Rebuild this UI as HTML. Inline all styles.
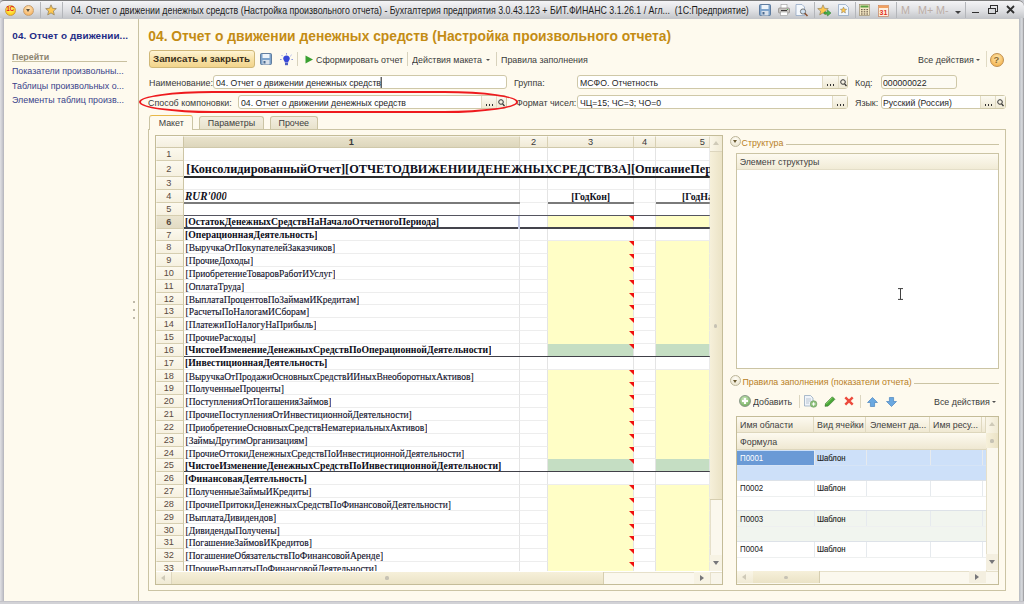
<!DOCTYPE html><html><head><meta charset="utf-8"><style>
*{margin:0;padding:0;box-sizing:border-box}
html,body{width:1024px;height:604px;overflow:hidden;background:#c8cacf;font-family:"Liberation Sans",sans-serif;font-size:8.8px;color:#333}
.a{position:absolute;white-space:nowrap}
#tb{position:absolute;left:0;top:0;width:1024px;height:20px;border-top:1px solid #7a7a7a;border-radius:4px 6px 0 0;background:linear-gradient(#f4f4f6,#dfe0e3 50%,#bfc1c5)}
#content{position:absolute;left:3.8px;top:19.4px;width:1015.3px;height:581.5px;background:#fefaee;overflow:hidden}
.vsep{position:absolute;width:1px;background:#bdb9a6}
.inp{position:absolute;background:#fff;border:1px solid #cfc8a8;border-radius:3px}
.inp .t{position:absolute;left:1.8px;top:1px;color:#1e1e1e;font-size:9.5px;transform:scaleX(0.915);transform-origin:0 0}
.lbl{position:absolute;color:#3a3a3a;white-space:nowrap;font-size:9.6px;transform:scaleX(0.925);transform-origin:0 0;margin-top:-0.6px}
.eb{position:absolute;top:0;bottom:0;border-left:1px solid #e2dcc4;background:linear-gradient(#fcfaf2,#efe9d4)}
.grid{position:absolute;overflow:hidden}
.cell{position:absolute;overflow:hidden;white-space:nowrap}
.ts{font-family:"Liberation Serif",serif;color:#1c1c30}
</style></head><body>
<div id="tb"></div>
<div class="a" style="left:4.9px;top:4.7px;width:11px;height:11px;border-radius:50%;background:radial-gradient(circle at 50% 35%,#fff58a,#ffd21a 70%,#e8a020);border:0.8px solid #d09a40"></div>
<div class="a" style="left:6.3px;top:5.4px;font:bold 6.4px 'Liberation Sans';color:#e0201a;letter-spacing:-0.4px">1С</div>
<div class="a" style="left:22.9px;top:4.7px;width:11.6px;height:11.6px;border-radius:50%;background:radial-gradient(circle at 50% 30%,#ffe6c0,#f8b868 75%,#e49a48);border:0.8px solid #c8a070"></div>
<div class="a" style="left:26px;top:9.2px;width:0;height:0;border-left:2.9px solid transparent;border-right:2.9px solid transparent;border-top:3.2px solid #585040"></div>
<div class="vsep" style="left:40.3px;top:2px;height:16px;background:#b4b6ba"></div>
<svg class="a" style="left:45px;top:4px" width="12" height="12" viewBox="0 0 12 12"><path d="M6 0.8 L7.5 4.3 L11.3 4.6 L8.4 7.1 L9.3 10.9 L6 8.9 L2.7 10.9 L3.6 7.1 L0.7 4.6 L4.5 4.3 Z" fill="#ffc850" stroke="#8a7a5a" stroke-width="0.7"/></svg>
<div class="vsep" style="left:62px;top:2px;height:16px;background:#b4b6ba"></div>
<div class="a" style="left:71.3px;top:3.6px;font-size:10.6px;color:#1c1c1c;transform:scaleX(0.832);transform-origin:left">04. Отчет о движении денежных средств (Настройка произвольного отчета) - Бухгалтерия предприятия 3.0.43.123 + БИТ.ФИНАНС 3.1.26.1 / Агл...&nbsp; (1С:Предприятие)</div>
<svg class="a" style="left:759px;top:4.2px" width="12" height="12" viewBox="0 0 12 12"><rect x="0.5" y="0.5" width="11" height="11" rx="1" fill="#7ea4cc" stroke="#4a6a90" stroke-width="0.8"/><rect x="2.5" y="1" width="7" height="4" fill="#eef4fa"/><rect x="2.5" y="7" width="7" height="4.5" fill="#d8e0ea"/><rect x="3.5" y="8" width="2" height="2.5" fill="#4a6a90"/></svg>
<svg class="a" style="left:778px;top:4px" width="12" height="12" viewBox="0 0 12 12"><rect x="3" y="0.5" width="6" height="4" fill="#fff" stroke="#999" stroke-width="0.6"/><rect x="0.5" y="4" width="11" height="5" rx="1" fill="#c8c4c0" stroke="#807a76" stroke-width="0.6"/><rect x="2.5" y="8" width="7" height="3.5" fill="#fff" stroke="#999" stroke-width="0.6"/><rect x="3" y="6" width="6" height="1" fill="#403c3c"/><circle cx="9.5" cy="5.5" r="0.6" fill="#3a3"/></svg>
<svg class="a" style="left:795px;top:3.5px" width="14" height="13" viewBox="0 0 14 13"><path d="M1 0.5 H7 L9.5 3 V11.5 H1 Z" fill="#f4f8fc" stroke="#8aa0c0" stroke-width="0.7"/><circle cx="8" cy="7.5" r="2.6" fill="#cfe0f0" stroke="#6a6a6a" stroke-width="0.9"/><path d="M9.8 9.3 L12.5 12" stroke="#8a5030" stroke-width="1.6"/></svg>
<div class="vsep" style="left:813.8px;top:2px;height:16px;background:#b4b6ba"></div>
<svg class="a" style="left:817px;top:3.5px" width="15" height="13" viewBox="0 0 15 13"><path d="M6 0.8 L7.5 4.3 L11.3 4.6 L8.4 7.1 L9.3 10.9 L6 8.9 L2.7 10.9 L3.6 7.1 L0.7 4.6 L4.5 4.3 Z" fill="#ffc850" stroke="#8a7a5a" stroke-width="0.6"/><path d="M7 8 H10.5 V6 L14 9 L10.5 12 V10 H7 Z" fill="#4ab04a" stroke="#2a7a2a" stroke-width="0.5"/></svg>
<svg class="a" style="left:837.5px;top:4px" width="11" height="12" viewBox="0 0 11 12"><path d="M0.5 0.5 H7.5 L10.5 3.5 V11.5 H0.5 Z" fill="#f0f6fc" stroke="#8aa0c0" stroke-width="0.7"/><path d="M5.5 3 L6.4 5.1 L8.6 5.3 L6.9 6.7 L7.5 9 L5.5 7.8 L3.5 9 L4.1 6.7 L2.4 5.3 L4.6 5.1 Z" fill="#ffc850" stroke="#8a7a5a" stroke-width="0.5"/></svg>
<div class="vsep" style="left:854.5px;top:2px;height:16px;background:#b4b6ba"></div>
<svg class="a" style="left:859px;top:4px" width="11" height="12" viewBox="0 0 11 12"><rect x="0.5" y="0.5" width="10" height="11" fill="#f4e8c4" stroke="#a09070" stroke-width="0.7"/><rect x="1.5" y="1.5" width="8" height="2" fill="#5aa040"/><g fill="#706050"><rect x="2" y="5" width="1.6" height="1.2"/><rect x="4.7" y="5" width="1.6" height="1.2"/><rect x="7.4" y="5" width="1.6" height="1.2"/><rect x="2" y="7.2" width="1.6" height="1.2"/><rect x="4.7" y="7.2" width="1.6" height="1.2"/><rect x="7.4" y="7.2" width="1.6" height="1.2"/><rect x="2" y="9.4" width="1.6" height="1.2"/><rect x="4.7" y="9.4" width="1.6" height="1.2"/><rect x="7.4" y="9.4" width="1.6" height="1.2"/></g></svg>
<svg class="a" style="left:877.5px;top:3.5px" width="11" height="13" viewBox="0 0 11 13"><rect x="0.5" y="1.5" width="10" height="11" fill="#fff0e0" stroke="#c08060" stroke-width="0.7"/><rect x="0.5" y="1.5" width="10" height="2.5" fill="#f0a060"/><text x="5.5" y="11" font-family="Liberation Sans" font-size="7" font-weight="bold" fill="#e03020" text-anchor="middle">31</text></svg>
<div class="vsep" style="left:895.7px;top:2px;height:16px;background:#b4b6ba"></div>
<div class="a" style="left:901px;top:3.6px;font:10.8px 'Liberation Sans';color:#bcaea6">M</div>
<div class="a" style="left:918px;top:3.6px;font:10.8px 'Liberation Sans';color:#bcaea6">M+</div>
<div class="a" style="left:936px;top:3.6px;font:10.8px 'Liberation Sans';color:#bcaea6">M-</div>
<div class="a" style="left:955px;top:11px;width:0;height:0;border-left:3px solid transparent;border-right:3px solid transparent;border-top:3px solid #404040"></div>
<div class="vsep" style="left:964.5px;top:2px;height:16px;background:#b4b6ba"></div>
<div class="a" style="left:972px;top:11.5px;width:6.5px;height:1.6px;background:#303030"></div>
<div class="a" style="left:990px;top:5px;width:8px;height:6.5px;border:1px solid #303030;border-top-width:1.6px"></div>
<div class="a" style="left:988px;top:7.5px;width:8px;height:6.5px;border:1px solid #303030;border-top-width:1.6px;background:#d8d9dc"></div>
<svg class="a" style="left:1006px;top:5px" width="9" height="9" viewBox="0 0 9 9"><path d="M1 1 L8 8 M8 1 L1 8" stroke="#303030" stroke-width="1.8"/></svg>
<div class="a" style="left:0;top:18px;width:3.9px;height:586px;background:linear-gradient(90deg,#e0e0e4,#cacad0 55%,#b2b2ba)"></div>
<div class="a" style="left:1019px;top:18px;width:5px;height:586px;background:linear-gradient(90deg,#b6bac0,#d6d8dc 55%,#c8c9cc 75%,#8a8a8e)"></div>
<div class="a" style="left:0;top:600.8px;width:1024px;height:3.2px;background:linear-gradient(#bcbbc2,#d2d2d6 50%)"></div>
<div id="content"></div>
<div class="a" style="left:12.3px;top:30.4px;font:bold 9.9px 'Liberation Sans';color:#1e2c86;letter-spacing:0.1px">04. Отчет о движении...</div>
<div class="a" style="left:12px;top:50.6px;font:bold 9.6px 'Liberation Sans';color:#8c8470;transform:scaleX(0.93);transform-origin:0 0">Перейти</div>
<div class="a" style="left:11.5px;top:61.3px;width:115px;height:1px;background:#c8c0a0"></div>
<div class="a" style="left:12px;top:65.1px;font-size:9.7px;color:#38428a;transform:scaleX(0.915);transform-origin:0 0">Показатели произвольны...</div>
<div class="a" style="left:12px;top:79.5px;font-size:9.7px;color:#38428a;transform:scaleX(0.915);transform-origin:0 0">Таблицы произвольных о...</div>
<div class="a" style="left:12px;top:93.89999999999999px;font-size:9.7px;color:#38428a;transform:scaleX(0.915);transform-origin:0 0">Элементы таблиц произв...</div>
<div class="a" style="left:138px;top:19.4px;width:1px;height:581.5px;background:#c9c2a2"></div>
<div class="a" style="left:133px;top:301.1px;width:2.4px;height:2.4px;border-radius:50%;background:#a8a290"></div>
<div class="a" style="left:133px;top:309.1px;width:2.4px;height:2.4px;border-radius:50%;background:#a8a290"></div>
<div class="a" style="left:133px;top:317.1px;width:2.4px;height:2.4px;border-radius:50%;background:#a8a290"></div>
<div class="a" style="left:148.3px;top:27.5px;font:bold 13.82px 'Liberation Sans';color:#c48c14">04. Отчет о движении денежных средств (Настройка произвольного отчета)</div>
<div class="a" style="left:148.5px;top:50.2px;width:106px;height:17.6px;border:1px solid #d0b878;border-radius:3px;background:linear-gradient(#fff4d4,#f8e2a8 50%,#f2d48c)"></div>
<div class="a" style="left:153px;top:53.2px;font:bold 9.8px 'Liberation Sans';color:#3a3020">Записать и закрыть</div>
<svg class="a" style="left:260px;top:53.2px" width="12" height="12" viewBox="0 0 12 12"><rect x="0.5" y="0.5" width="11" height="11" rx="1" fill="#7ea4cc" stroke="#4a6a90" stroke-width="0.8"/><rect x="2.5" y="1" width="7" height="4" fill="#eef4fa"/><rect x="2.5" y="7" width="7" height="4.5" fill="#d8e0ea"/><rect x="3.5" y="8" width="2" height="2.5" fill="#4a6a90"/></svg>
<svg class="a" style="left:280px;top:52.5px" width="13" height="13" viewBox="0 0 13 13"><g stroke="#7080e0" stroke-width="0.8"><path d="M6.5 0 V1.6 M1.5 2 L2.6 3.1 M11.5 2 L10.4 3.1 M0 6.5 H1.6 M13 6.5 H11.4"/></g><path d="M6.5 2.4 C4.3 2.4 3.2 4 3.2 5.6 C3.2 7.2 4.6 8 4.8 9.4 H8.2 C8.4 8 9.8 7.2 9.8 5.6 C9.8 4 8.7 2.4 6.5 2.4 Z" fill="#3848d8"/><rect x="5" y="9.8" width="3" height="2.4" fill="#5060c0"/></svg>
<div class="vsep" style="left:297.3px;top:52px;height:14px;background:#d8d2bc"></div>
<svg class="a" style="left:305px;top:54.5px" width="9" height="9" viewBox="0 0 9 9"><path d="M0.5 0.5 L8 4.5 L0.5 8.5 Z" fill="#3aa030"/></svg>
<div class="lbl" style="left:316.3px;top:54.2px">Сформировать отчет</div>
<div class="vsep" style="left:406.8px;top:52px;height:14px;background:#d8d2bc"></div>
<div class="lbl" style="left:412px;top:54.2px">Действия макета</div>
<div class="a" style="left:486px;top:59px;width:0;height:0;border-left:2.5px solid transparent;border-right:2.5px solid transparent;border-top:2.8px solid #505050"></div>
<div class="vsep" style="left:495.7px;top:52px;height:14px;background:#d8d2bc"></div>
<div class="lbl" style="left:501px;top:54.2px">Правила заполнения</div>
<div class="lbl" style="left:918px;top:54.2px">Все действия</div>
<div class="a" style="left:976px;top:59px;width:0;height:0;border-left:2.5px solid transparent;border-right:2.5px solid transparent;border-top:2.8px solid #505050"></div>
<div class="vsep" style="left:985.5px;top:51px;height:16px;background:#e0dac4"></div>
<div class="a" style="left:989.5px;top:52.7px;width:14px;height:14px;border-radius:50%;background:radial-gradient(circle at 50% 35%,#ffe8b0,#f4b450 80%);border:0.8px solid #c09050"></div>
<div class="a" style="left:993.6px;top:54.3px;font:bold 9.5px 'Liberation Sans';color:#8a6a30">?</div>
<div class="lbl" style="left:148.5px;top:77.2px">Наименование:</div>
<div class="inp" style="left:213px;top:74.6px;width:293.6px;height:14.8px;background:#fff"><div class="t">04. Отчет о движении денежных средств<span style="display:inline-block;width:1px;height:11px;background:#000;vertical-align:-2px"></span></div></div>
<div class="lbl" style="left:148.2px;top:97.4px">Способ компоновки:</div>
<div class="inp" style="left:238.4px;top:94.5px;width:268.2px;height:14.8px;background:#fff"><div class="t">04. Отчет о движении денежных средств</div><div class="eb" style="right:0;width:9.5px"><svg style="position:absolute;left:1.2px;top:3px" width="7" height="8" viewBox="0 0 7 8"><circle cx="3" cy="3" r="2.3" fill="none" stroke="#333" stroke-width="1"/><path d="M4.6 4.8 L6.5 7" stroke="#333" stroke-width="1.3"/></svg></div><div class="eb" style="right:9.5px;width:15.5px"><div style="position:absolute;left:3px;bottom:2.5px;width:9px;height:2px;background:radial-gradient(circle,#333 0.9px,transparent 1px) 0 0/3px 2px repeat-x"></div></div></div>
<div class="lbl" style="left:513.8px;top:77.2px">Группа:</div>
<div class="inp" style="left:577.4px;top:74.5px;width:270.7px;height:14.8px;background:#fff"><div class="t">МСФО. Отчетность</div><div class="eb" style="right:0;width:9.5px"><svg style="position:absolute;left:1.2px;top:3px" width="7" height="8" viewBox="0 0 7 8"><circle cx="3" cy="3" r="2.3" fill="none" stroke="#333" stroke-width="1"/><path d="M4.6 4.8 L6.5 7" stroke="#333" stroke-width="1.3"/></svg></div><div class="eb" style="right:9.5px;width:15.5px"><div style="position:absolute;left:3px;bottom:2.5px;width:9px;height:2px;background:radial-gradient(circle,#333 0.9px,transparent 1px) 0 0/3px 2px repeat-x"></div></div></div>
<div class="lbl" style="left:516px;top:97.4px">Формат чисел:</div>
<div class="inp" style="left:577.4px;top:94.5px;width:270.7px;height:14.8px;background:#fff"><div class="t">ЧЦ=15; ЧС=3; ЧО=0</div><div class="eb" style="right:0px;width:15.5px"><div style="position:absolute;left:3px;bottom:2.5px;width:9px;height:2px;background:radial-gradient(circle,#333 0.9px,transparent 1px) 0 0/3px 2px repeat-x"></div></div></div>
<div class="lbl" style="left:854.7px;top:77.2px">Код:</div>
<div class="inp" style="left:880.5px;top:74.6px;width:76.6px;height:14.6px;background:#fdfbf3"><div class="t">000000022</div></div>
<div class="lbl" style="left:854.7px;top:97.4px">Язык:</div>
<div class="inp" style="left:880.5px;top:94.6px;width:125.2px;height:14.8px;background:#fff"><div class="t">Русский (Россия)</div><div class="eb" style="right:0;width:9.5px"><svg style="position:absolute;left:1.2px;top:3px" width="7" height="8" viewBox="0 0 7 8"><circle cx="3" cy="3" r="2.3" fill="none" stroke="#333" stroke-width="1"/><path d="M4.6 4.8 L6.5 7" stroke="#333" stroke-width="1.3"/></svg></div><div class="eb" style="right:9.5px;width:15.5px"><div style="position:absolute;left:3px;bottom:2.5px;width:9px;height:2px;background:radial-gradient(circle,#333 0.9px,transparent 1px) 0 0/3px 2px repeat-x"></div></div></div>
<div class="a" style="left:139.4px;top:90.8px;width:378.4px;height:22.4px;border:2.1px solid #ee1a1e;border-radius:75px/11.2px"></div>
<div class="a" style="left:148px;top:129px;width:857.5px;height:461.5px;border:1px solid #cbc4a4;background:#fefaee"></div>
<div class="a" style="left:149.4px;top:114.8px;width:43.7px;height:15.2px;border:1px solid #cbc4a4;border-bottom:none;border-radius:3px 3px 0 0;background:#fefaee;border-top:1.4px solid #e8b848"></div>
<div class="a" style="left:149.4px;width:43.7px;top:117.6px;text-align:center;font-size:8.9px;color:#404040">Макет</div>
<div class="a" style="left:198.6px;top:115.5px;width:65.8px;height:13.5px;border:1px solid #cbc4a4;border-bottom:none;border-radius:3px 3px 0 0;background:linear-gradient(#f2eee0,#e8e2cc)"></div>
<div class="a" style="left:198.6px;width:65.8px;top:117.6px;text-align:center;font-size:8.9px;color:#404040">Параметры</div>
<div class="a" style="left:269.9px;top:115.5px;width:47.8px;height:13.5px;border:1px solid #cbc4a4;border-bottom:none;border-radius:3px 3px 0 0;background:linear-gradient(#f2eee0,#e8e2cc)"></div>
<div class="a" style="left:269.9px;width:47.8px;top:117.6px;text-align:center;font-size:8.9px;color:#404040">Прочее</div>
<div class="a" style="left:154.9px;top:135.2px;width:568.0px;height:449.40000000000003px;border:1.4px solid #c4bc98;background:#fff"></div>
<div class="grid" style="left:154.9px;top:135.2px;width:554.9px;height:436.3px;clip-path:inset(1.4px 0 0 1.4px)"><div class="cell" style="left:0;top:0;width:28.799999999999983px;height:12.700000000000017px;background:linear-gradient(#fcf9f0,#f4efdf);border-right:1px solid #cdc5a5;border-bottom:1px solid #d0c8aa"></div><div class="cell" style="left:28.799999999999983px;top:0;width:336.2px;height:12.700000000000017px;background:linear-gradient(#ece6d0,#ddd6bc);border-right:1px solid #d8d0b4;border-bottom:1px solid #cfc8aa;text-align:center;font-size:9.2px;font-weight:bold;color:#3a3a3a;line-height:14.900000000000016px">1</div><div class="cell" style="left:365.0px;top:0;width:28.100000000000023px;height:12.700000000000017px;background:linear-gradient(#fbf8ee,#f0ead6);border-right:1px solid #d8d0b4;border-bottom:1px solid #cfc8aa;text-align:center;font-size:9.2px;font-weight:normal;color:#3a3a3a;line-height:14.900000000000016px">2</div><div class="cell" style="left:393.1px;top:0;width:86.29999999999995px;height:12.700000000000017px;background:linear-gradient(#fbf8ee,#f0ead6);border-right:1px solid #d8d0b4;border-bottom:1px solid #cfc8aa;text-align:center;font-size:9.2px;font-weight:normal;color:#3a3a3a;line-height:14.900000000000016px">3</div><div class="cell" style="left:479.4px;top:0;width:21.5px;height:12.700000000000017px;background:linear-gradient(#fbf8ee,#f0ead6);border-right:1px solid #d8d0b4;border-bottom:1px solid #cfc8aa;text-align:center;font-size:9.2px;font-weight:normal;color:#3a3a3a;line-height:14.900000000000016px">4</div><div class="cell" style="left:500.9px;top:0;width:54.0px;height:12.700000000000017px;background:linear-gradient(#fbf8ee,#f0ead6);border-right:1px solid #d8d0b4;border-bottom:1px solid #cfc8aa;text-align:center;font-size:9.2px;font-weight:normal;color:#3a3a3a;line-height:14.900000000000016px"></div><div class="cell" style="left:500.9px;top:0;width:49.0px;height:12.700000000000017px;text-align:right;font-size:9.2px;color:#3a3a3a;line-height:14.900000000000016px">5</div><div class="cell" style="left:0;top:12.700000000000017px;width:28.799999999999983px;height:13.0px;background:linear-gradient(#fcf9ee,#f6f1e0);border-right:1px solid #cdc5a5;border-bottom:1px solid #d6ceb0;text-align:center;font-size:9.2px;font-weight:normal;color:#5a4a40;line-height:13.6px">1</div><div class="cell" style="left:28.799999999999983px;top:12.700000000000017px;width:336.2px;height:13.0px;background:#fff;border-right:1px solid #e4e4e4;border-bottom:1px solid #ededed"></div><div class="cell" style="left:365.0px;top:12.700000000000017px;width:28.100000000000023px;height:13.0px;background:#fff;border-right:1px solid #e4e4e4;border-bottom:1px solid #ededed"></div><div class="cell" style="left:393.1px;top:12.700000000000017px;width:86.29999999999995px;height:13.0px;background:#fff;border-right:1px solid #e4e4e4;border-bottom:1px solid #ededed"></div><div class="cell" style="left:479.4px;top:12.700000000000017px;width:21.5px;height:13.0px;background:#fff;border-right:1px solid #e4e4e4;border-bottom:1px solid #ededed"></div><div class="cell" style="left:500.9px;top:12.700000000000017px;width:54.0px;height:13.0px;background:#fff;border-right:1px solid #e4e4e4;border-bottom:1px solid #ededed"></div><div class="cell" style="left:0;top:25.700000000000017px;width:28.799999999999983px;height:16.299999999999983px;background:linear-gradient(#fcf9ee,#f6f1e0);border-right:1px solid #cdc5a5;border-bottom:1px solid #d6ceb0;text-align:center;font-size:9.2px;font-weight:normal;color:#5a4a40;line-height:16.899999999999984px">2</div><div class="cell" style="left:28.799999999999983px;top:25.700000000000017px;width:336.2px;height:16.299999999999983px;background:#fff;border-right:1px solid #e4e4e4;border-bottom:1px solid #ededed"></div><div class="cell" style="left:365.0px;top:25.700000000000017px;width:28.100000000000023px;height:16.299999999999983px;background:#fff;border-right:1px solid #e4e4e4;border-bottom:1px solid #ededed"></div><div class="cell" style="left:393.1px;top:25.700000000000017px;width:86.29999999999995px;height:16.299999999999983px;background:#fff;border-right:1px solid #e4e4e4;border-bottom:1px solid #ededed"></div><div class="cell" style="left:479.4px;top:25.700000000000017px;width:21.5px;height:16.299999999999983px;background:#fff;border-right:1px solid #e4e4e4;border-bottom:1px solid #ededed"></div><div class="cell" style="left:500.9px;top:25.700000000000017px;width:54.0px;height:16.299999999999983px;background:#fff;border-right:1px solid #e4e4e4;border-bottom:1px solid #ededed"></div><div class="cell" style="left:0;top:42.0px;width:28.799999999999983px;height:12.830000000000013px;background:linear-gradient(#fcf9ee,#f6f1e0);border-right:1px solid #cdc5a5;border-bottom:1px solid #d6ceb0;text-align:center;font-size:9.2px;font-weight:normal;color:#5a4a40;line-height:13.430000000000012px">3</div><div class="cell" style="left:28.799999999999983px;top:42.0px;width:336.2px;height:12.830000000000013px;background:#fff;border-right:1px solid #e4e4e4;border-bottom:1px solid #ededed"></div><div class="cell" style="left:365.0px;top:42.0px;width:28.100000000000023px;height:12.830000000000013px;background:#fff;border-right:1px solid #e4e4e4;border-bottom:1px solid #ededed"></div><div class="cell" style="left:393.1px;top:42.0px;width:86.29999999999995px;height:12.830000000000013px;background:#fff;border-right:1px solid #e4e4e4;border-bottom:1px solid #ededed"></div><div class="cell" style="left:479.4px;top:42.0px;width:21.5px;height:12.830000000000013px;background:#fff;border-right:1px solid #e4e4e4;border-bottom:1px solid #ededed"></div><div class="cell" style="left:500.9px;top:42.0px;width:54.0px;height:12.830000000000013px;background:#fff;border-right:1px solid #e4e4e4;border-bottom:1px solid #ededed"></div><div class="cell" style="left:0;top:54.83000000000001px;width:28.799999999999983px;height:12.829999999999984px;background:linear-gradient(#fcf9ee,#f6f1e0);border-right:1px solid #cdc5a5;border-bottom:1px solid #d6ceb0;text-align:center;font-size:9.2px;font-weight:normal;color:#5a4a40;line-height:13.429999999999984px">4</div><div class="cell" style="left:28.799999999999983px;top:54.83000000000001px;width:336.2px;height:12.829999999999984px;background:#fff;border-right:1px solid #e4e4e4;border-bottom:1px solid #ededed"></div><div class="cell" style="left:365.0px;top:54.83000000000001px;width:28.100000000000023px;height:12.829999999999984px;background:#fff;border-right:1px solid #e4e4e4;border-bottom:1px solid #ededed"></div><div class="cell" style="left:393.1px;top:54.83000000000001px;width:86.29999999999995px;height:12.829999999999984px;background:#fff;border-right:1px solid #e4e4e4;border-bottom:1px solid #ededed"></div><div class="cell" style="left:479.4px;top:54.83000000000001px;width:21.5px;height:12.829999999999984px;background:#fff;border-right:1px solid #e4e4e4;border-bottom:1px solid #ededed"></div><div class="cell" style="left:500.9px;top:54.83000000000001px;width:54.0px;height:12.829999999999984px;background:#fff;border-right:1px solid #e4e4e4;border-bottom:1px solid #ededed"></div><div class="cell" style="left:0;top:67.66px;width:28.799999999999983px;height:12.830000000000013px;background:linear-gradient(#fcf9ee,#f6f1e0);border-right:1px solid #cdc5a5;border-bottom:1px solid #d6ceb0;text-align:center;font-size:9.2px;font-weight:normal;color:#5a4a40;line-height:13.430000000000012px">5</div><div class="cell" style="left:28.799999999999983px;top:67.66px;width:336.2px;height:12.830000000000013px;background:#fff;border-right:1px solid #e4e4e4;border-bottom:1px solid #ededed"></div><div class="cell" style="left:365.0px;top:67.66px;width:28.100000000000023px;height:12.830000000000013px;background:#fff;border-right:1px solid #e4e4e4;border-bottom:1px solid #ededed"></div><div class="cell" style="left:393.1px;top:67.66px;width:86.29999999999995px;height:12.830000000000013px;background:#fff;border-right:1px solid #e4e4e4;border-bottom:1px solid #ededed"></div><div class="cell" style="left:479.4px;top:67.66px;width:21.5px;height:12.830000000000013px;background:#fff;border-right:1px solid #e4e4e4;border-bottom:1px solid #ededed"></div><div class="cell" style="left:500.9px;top:67.66px;width:54.0px;height:12.830000000000013px;background:#fff;border-right:1px solid #e4e4e4;border-bottom:1px solid #ededed"></div><div class="cell" style="left:0;top:80.49000000000001px;width:28.799999999999983px;height:12.829999999999984px;background:linear-gradient(#ebe5d0,#e2dbc4);border-right:1px solid #cdc5a5;border-bottom:1px solid #d6ceb0;text-align:center;font-size:9.2px;font-weight:bold;color:#5a4a40;line-height:13.429999999999984px">6</div><div class="cell" style="left:28.799999999999983px;top:80.49000000000001px;width:336.2px;height:12.829999999999984px;background:#fff;border-right:1px solid #e4e4e4;border-bottom:1px solid #ededed"></div><div class="cell" style="left:365.0px;top:80.49000000000001px;width:28.100000000000023px;height:12.829999999999984px;background:#fff;border-right:1px solid #e4e4e4;border-bottom:1px solid #ededed"></div><div class="cell" style="left:393.1px;top:80.49000000000001px;width:86.29999999999995px;height:12.829999999999984px;background:#fffec6;border-right:1px solid #e4e4e4;border-bottom:1px solid #fffec6"></div><div class="cell" style="left:474.4px;top:80.49000000000001px;width:0;height:0;border-left:5px solid transparent;border-top:5px solid #f01010"></div><div class="cell" style="left:479.4px;top:80.49000000000001px;width:21.5px;height:12.829999999999984px;background:#fff;border-right:1px solid #e4e4e4;border-bottom:1px solid #ededed"></div><div class="cell" style="left:500.9px;top:80.49000000000001px;width:54.0px;height:12.829999999999984px;background:#fffec6;border-right:1px solid #e4e4e4;border-bottom:1px solid #fffec6"></div><div class="cell" style="left:0;top:93.32px;width:28.799999999999983px;height:12.830000000000013px;background:linear-gradient(#fcf9ee,#f6f1e0);border-right:1px solid #cdc5a5;border-bottom:1px solid #d6ceb0;text-align:center;font-size:9.2px;font-weight:normal;color:#5a4a40;line-height:13.430000000000012px">7</div><div class="cell" style="left:28.799999999999983px;top:93.32px;width:336.2px;height:12.830000000000013px;background:#fff;border-right:1px solid #e4e4e4;border-bottom:1px solid #ededed"></div><div class="cell" style="left:365.0px;top:93.32px;width:28.100000000000023px;height:12.830000000000013px;background:#fff;border-right:1px solid #e4e4e4;border-bottom:1px solid #ededed"></div><div class="cell" style="left:393.1px;top:93.32px;width:86.29999999999995px;height:12.830000000000013px;background:#fff;border-right:1px solid #e4e4e4;border-bottom:1px solid #ededed"></div><div class="cell" style="left:479.4px;top:93.32px;width:21.5px;height:12.830000000000013px;background:#fff;border-right:1px solid #e4e4e4;border-bottom:1px solid #ededed"></div><div class="cell" style="left:500.9px;top:93.32px;width:54.0px;height:12.830000000000013px;background:#fff;border-right:1px solid #e4e4e4;border-bottom:1px solid #ededed"></div><div class="cell" style="left:0;top:106.15px;width:28.799999999999983px;height:12.830000000000013px;background:linear-gradient(#fcf9ee,#f6f1e0);border-right:1px solid #cdc5a5;border-bottom:1px solid #d6ceb0;text-align:center;font-size:9.2px;font-weight:normal;color:#5a4a40;line-height:13.430000000000012px">8</div><div class="cell" style="left:28.799999999999983px;top:106.15px;width:336.2px;height:12.830000000000013px;background:#fff;border-right:1px solid #e4e4e4;border-bottom:1px solid #ededed"></div><div class="cell" style="left:365.0px;top:106.15px;width:28.100000000000023px;height:12.830000000000013px;background:#fff;border-right:1px solid #e4e4e4;border-bottom:1px solid #ededed"></div><div class="cell" style="left:393.1px;top:106.15px;width:86.29999999999995px;height:12.830000000000013px;background:#fffec6;border-right:1px solid #e4e4e4;border-bottom:1px solid #fffec6"></div><div class="cell" style="left:474.4px;top:106.15px;width:0;height:0;border-left:5px solid transparent;border-top:5px solid #f01010"></div><div class="cell" style="left:479.4px;top:106.15px;width:21.5px;height:12.830000000000013px;background:#fff;border-right:1px solid #e4e4e4;border-bottom:1px solid #ededed"></div><div class="cell" style="left:500.9px;top:106.15px;width:54.0px;height:12.830000000000013px;background:#fffec6;border-right:1px solid #e4e4e4;border-bottom:1px solid #fffec6"></div><div class="cell" style="left:0;top:118.98000000000002px;width:28.799999999999983px;height:12.829999999999984px;background:linear-gradient(#fcf9ee,#f6f1e0);border-right:1px solid #cdc5a5;border-bottom:1px solid #d6ceb0;text-align:center;font-size:9.2px;font-weight:normal;color:#5a4a40;line-height:13.429999999999984px">9</div><div class="cell" style="left:28.799999999999983px;top:118.98000000000002px;width:336.2px;height:12.829999999999984px;background:#fff;border-right:1px solid #e4e4e4;border-bottom:1px solid #ededed"></div><div class="cell" style="left:365.0px;top:118.98000000000002px;width:28.100000000000023px;height:12.829999999999984px;background:#fff;border-right:1px solid #e4e4e4;border-bottom:1px solid #ededed"></div><div class="cell" style="left:393.1px;top:118.98000000000002px;width:86.29999999999995px;height:12.829999999999984px;background:#fffec6;border-right:1px solid #e4e4e4;border-bottom:1px solid #fffec6"></div><div class="cell" style="left:474.4px;top:118.98000000000002px;width:0;height:0;border-left:5px solid transparent;border-top:5px solid #f01010"></div><div class="cell" style="left:479.4px;top:118.98000000000002px;width:21.5px;height:12.829999999999984px;background:#fff;border-right:1px solid #e4e4e4;border-bottom:1px solid #ededed"></div><div class="cell" style="left:500.9px;top:118.98000000000002px;width:54.0px;height:12.829999999999984px;background:#fffec6;border-right:1px solid #e4e4e4;border-bottom:1px solid #fffec6"></div><div class="cell" style="left:0;top:131.81px;width:28.799999999999983px;height:12.829999999999984px;background:linear-gradient(#fcf9ee,#f6f1e0);border-right:1px solid #cdc5a5;border-bottom:1px solid #d6ceb0;text-align:center;font-size:9.2px;font-weight:normal;color:#5a4a40;line-height:13.429999999999984px">10</div><div class="cell" style="left:28.799999999999983px;top:131.81px;width:336.2px;height:12.829999999999984px;background:#fff;border-right:1px solid #e4e4e4;border-bottom:1px solid #ededed"></div><div class="cell" style="left:365.0px;top:131.81px;width:28.100000000000023px;height:12.829999999999984px;background:#fff;border-right:1px solid #e4e4e4;border-bottom:1px solid #ededed"></div><div class="cell" style="left:393.1px;top:131.81px;width:86.29999999999995px;height:12.829999999999984px;background:#fffec6;border-right:1px solid #e4e4e4;border-bottom:1px solid #fffec6"></div><div class="cell" style="left:474.4px;top:131.81px;width:0;height:0;border-left:5px solid transparent;border-top:5px solid #f01010"></div><div class="cell" style="left:479.4px;top:131.81px;width:21.5px;height:12.829999999999984px;background:#fff;border-right:1px solid #e4e4e4;border-bottom:1px solid #ededed"></div><div class="cell" style="left:500.9px;top:131.81px;width:54.0px;height:12.829999999999984px;background:#fffec6;border-right:1px solid #e4e4e4;border-bottom:1px solid #fffec6"></div><div class="cell" style="left:0;top:144.64px;width:28.799999999999983px;height:12.829999999999984px;background:linear-gradient(#fcf9ee,#f6f1e0);border-right:1px solid #cdc5a5;border-bottom:1px solid #d6ceb0;text-align:center;font-size:9.2px;font-weight:normal;color:#5a4a40;line-height:13.429999999999984px">11</div><div class="cell" style="left:28.799999999999983px;top:144.64px;width:336.2px;height:12.829999999999984px;background:#fff;border-right:1px solid #e4e4e4;border-bottom:1px solid #ededed"></div><div class="cell" style="left:365.0px;top:144.64px;width:28.100000000000023px;height:12.829999999999984px;background:#fff;border-right:1px solid #e4e4e4;border-bottom:1px solid #ededed"></div><div class="cell" style="left:393.1px;top:144.64px;width:86.29999999999995px;height:12.829999999999984px;background:#fffec6;border-right:1px solid #e4e4e4;border-bottom:1px solid #fffec6"></div><div class="cell" style="left:474.4px;top:144.64px;width:0;height:0;border-left:5px solid transparent;border-top:5px solid #f01010"></div><div class="cell" style="left:479.4px;top:144.64px;width:21.5px;height:12.829999999999984px;background:#fff;border-right:1px solid #e4e4e4;border-bottom:1px solid #ededed"></div><div class="cell" style="left:500.9px;top:144.64px;width:54.0px;height:12.829999999999984px;background:#fffec6;border-right:1px solid #e4e4e4;border-bottom:1px solid #fffec6"></div><div class="cell" style="left:0;top:157.46999999999997px;width:28.799999999999983px;height:12.830000000000041px;background:linear-gradient(#fcf9ee,#f6f1e0);border-right:1px solid #cdc5a5;border-bottom:1px solid #d6ceb0;text-align:center;font-size:9.2px;font-weight:normal;color:#5a4a40;line-height:13.43000000000004px">12</div><div class="cell" style="left:28.799999999999983px;top:157.46999999999997px;width:336.2px;height:12.830000000000041px;background:#fff;border-right:1px solid #e4e4e4;border-bottom:1px solid #ededed"></div><div class="cell" style="left:365.0px;top:157.46999999999997px;width:28.100000000000023px;height:12.830000000000041px;background:#fff;border-right:1px solid #e4e4e4;border-bottom:1px solid #ededed"></div><div class="cell" style="left:393.1px;top:157.46999999999997px;width:86.29999999999995px;height:12.830000000000041px;background:#fffec6;border-right:1px solid #e4e4e4;border-bottom:1px solid #fffec6"></div><div class="cell" style="left:474.4px;top:157.46999999999997px;width:0;height:0;border-left:5px solid transparent;border-top:5px solid #f01010"></div><div class="cell" style="left:479.4px;top:157.46999999999997px;width:21.5px;height:12.830000000000041px;background:#fff;border-right:1px solid #e4e4e4;border-bottom:1px solid #ededed"></div><div class="cell" style="left:500.9px;top:157.46999999999997px;width:54.0px;height:12.830000000000041px;background:#fffec6;border-right:1px solid #e4e4e4;border-bottom:1px solid #fffec6"></div><div class="cell" style="left:0;top:170.3px;width:28.799999999999983px;height:12.829999999999984px;background:linear-gradient(#fcf9ee,#f6f1e0);border-right:1px solid #cdc5a5;border-bottom:1px solid #d6ceb0;text-align:center;font-size:9.2px;font-weight:normal;color:#5a4a40;line-height:13.429999999999984px">13</div><div class="cell" style="left:28.799999999999983px;top:170.3px;width:336.2px;height:12.829999999999984px;background:#fff;border-right:1px solid #e4e4e4;border-bottom:1px solid #ededed"></div><div class="cell" style="left:365.0px;top:170.3px;width:28.100000000000023px;height:12.829999999999984px;background:#fff;border-right:1px solid #e4e4e4;border-bottom:1px solid #ededed"></div><div class="cell" style="left:393.1px;top:170.3px;width:86.29999999999995px;height:12.829999999999984px;background:#fffec6;border-right:1px solid #e4e4e4;border-bottom:1px solid #fffec6"></div><div class="cell" style="left:474.4px;top:170.3px;width:0;height:0;border-left:5px solid transparent;border-top:5px solid #f01010"></div><div class="cell" style="left:479.4px;top:170.3px;width:21.5px;height:12.829999999999984px;background:#fff;border-right:1px solid #e4e4e4;border-bottom:1px solid #ededed"></div><div class="cell" style="left:500.9px;top:170.3px;width:54.0px;height:12.829999999999984px;background:#fffec6;border-right:1px solid #e4e4e4;border-bottom:1px solid #fffec6"></div><div class="cell" style="left:0;top:183.13px;width:28.799999999999983px;height:12.829999999999984px;background:linear-gradient(#fcf9ee,#f6f1e0);border-right:1px solid #cdc5a5;border-bottom:1px solid #d6ceb0;text-align:center;font-size:9.2px;font-weight:normal;color:#5a4a40;line-height:13.429999999999984px">14</div><div class="cell" style="left:28.799999999999983px;top:183.13px;width:336.2px;height:12.829999999999984px;background:#fff;border-right:1px solid #e4e4e4;border-bottom:1px solid #ededed"></div><div class="cell" style="left:365.0px;top:183.13px;width:28.100000000000023px;height:12.829999999999984px;background:#fff;border-right:1px solid #e4e4e4;border-bottom:1px solid #ededed"></div><div class="cell" style="left:393.1px;top:183.13px;width:86.29999999999995px;height:12.829999999999984px;background:#fffec6;border-right:1px solid #e4e4e4;border-bottom:1px solid #fffec6"></div><div class="cell" style="left:474.4px;top:183.13px;width:0;height:0;border-left:5px solid transparent;border-top:5px solid #f01010"></div><div class="cell" style="left:479.4px;top:183.13px;width:21.5px;height:12.829999999999984px;background:#fff;border-right:1px solid #e4e4e4;border-bottom:1px solid #ededed"></div><div class="cell" style="left:500.9px;top:183.13px;width:54.0px;height:12.829999999999984px;background:#fffec6;border-right:1px solid #e4e4e4;border-bottom:1px solid #fffec6"></div><div class="cell" style="left:0;top:195.95999999999998px;width:28.799999999999983px;height:12.830000000000041px;background:linear-gradient(#fcf9ee,#f6f1e0);border-right:1px solid #cdc5a5;border-bottom:1px solid #d6ceb0;text-align:center;font-size:9.2px;font-weight:normal;color:#5a4a40;line-height:13.43000000000004px">15</div><div class="cell" style="left:28.799999999999983px;top:195.95999999999998px;width:336.2px;height:12.830000000000041px;background:#fff;border-right:1px solid #e4e4e4;border-bottom:1px solid #ededed"></div><div class="cell" style="left:365.0px;top:195.95999999999998px;width:28.100000000000023px;height:12.830000000000041px;background:#fff;border-right:1px solid #e4e4e4;border-bottom:1px solid #ededed"></div><div class="cell" style="left:393.1px;top:195.95999999999998px;width:86.29999999999995px;height:12.830000000000041px;background:#fffec6;border-right:1px solid #e4e4e4;border-bottom:1px solid #fffec6"></div><div class="cell" style="left:474.4px;top:195.95999999999998px;width:0;height:0;border-left:5px solid transparent;border-top:5px solid #f01010"></div><div class="cell" style="left:479.4px;top:195.95999999999998px;width:21.5px;height:12.830000000000041px;background:#fff;border-right:1px solid #e4e4e4;border-bottom:1px solid #ededed"></div><div class="cell" style="left:500.9px;top:195.95999999999998px;width:54.0px;height:12.830000000000041px;background:#fffec6;border-right:1px solid #e4e4e4;border-bottom:1px solid #fffec6"></div><div class="cell" style="left:0;top:208.79000000000002px;width:28.799999999999983px;height:12.829999999999984px;background:linear-gradient(#fcf9ee,#f6f1e0);border-right:1px solid #cdc5a5;border-bottom:1px solid #d6ceb0;text-align:center;font-size:9.2px;font-weight:normal;color:#5a4a40;line-height:13.429999999999984px">16</div><div class="cell" style="left:28.799999999999983px;top:208.79000000000002px;width:336.2px;height:12.829999999999984px;background:#fff;border-right:1px solid #e4e4e4;border-bottom:1px solid #ededed"></div><div class="cell" style="left:365.0px;top:208.79000000000002px;width:28.100000000000023px;height:12.829999999999984px;background:#fff;border-right:1px solid #e4e4e4;border-bottom:1px solid #ededed"></div><div class="cell" style="left:393.1px;top:208.79000000000002px;width:86.29999999999995px;height:12.829999999999984px;background:#c5dec3;border-right:1px solid #e4e4e4;border-bottom:1px solid #c5dec3"></div><div class="cell" style="left:474.4px;top:208.79000000000002px;width:0;height:0;border-left:5px solid transparent;border-top:5px solid #f01010"></div><div class="cell" style="left:479.4px;top:208.79000000000002px;width:21.5px;height:12.829999999999984px;background:#fff;border-right:1px solid #e4e4e4;border-bottom:1px solid #ededed"></div><div class="cell" style="left:500.9px;top:208.79000000000002px;width:54.0px;height:12.829999999999984px;background:#c5dec3;border-right:1px solid #e4e4e4;border-bottom:1px solid #c5dec3"></div><div class="cell" style="left:0;top:221.62px;width:28.799999999999983px;height:12.829999999999984px;background:linear-gradient(#fcf9ee,#f6f1e0);border-right:1px solid #cdc5a5;border-bottom:1px solid #d6ceb0;text-align:center;font-size:9.2px;font-weight:normal;color:#5a4a40;line-height:13.429999999999984px">17</div><div class="cell" style="left:28.799999999999983px;top:221.62px;width:336.2px;height:12.829999999999984px;background:#fff;border-right:1px solid #e4e4e4;border-bottom:1px solid #ededed"></div><div class="cell" style="left:365.0px;top:221.62px;width:28.100000000000023px;height:12.829999999999984px;background:#fff;border-right:1px solid #e4e4e4;border-bottom:1px solid #ededed"></div><div class="cell" style="left:393.1px;top:221.62px;width:86.29999999999995px;height:12.829999999999984px;background:#fff;border-right:1px solid #e4e4e4;border-bottom:1px solid #ededed"></div><div class="cell" style="left:479.4px;top:221.62px;width:21.5px;height:12.829999999999984px;background:#fff;border-right:1px solid #e4e4e4;border-bottom:1px solid #ededed"></div><div class="cell" style="left:500.9px;top:221.62px;width:54.0px;height:12.829999999999984px;background:#fff;border-right:1px solid #e4e4e4;border-bottom:1px solid #ededed"></div><div class="cell" style="left:0;top:234.45px;width:28.799999999999983px;height:12.830000000000041px;background:linear-gradient(#fcf9ee,#f6f1e0);border-right:1px solid #cdc5a5;border-bottom:1px solid #d6ceb0;text-align:center;font-size:9.2px;font-weight:normal;color:#5a4a40;line-height:13.43000000000004px">18</div><div class="cell" style="left:28.799999999999983px;top:234.45px;width:336.2px;height:12.830000000000041px;background:#fff;border-right:1px solid #e4e4e4;border-bottom:1px solid #ededed"></div><div class="cell" style="left:365.0px;top:234.45px;width:28.100000000000023px;height:12.830000000000041px;background:#fff;border-right:1px solid #e4e4e4;border-bottom:1px solid #ededed"></div><div class="cell" style="left:393.1px;top:234.45px;width:86.29999999999995px;height:12.830000000000041px;background:#fffec6;border-right:1px solid #e4e4e4;border-bottom:1px solid #fffec6"></div><div class="cell" style="left:474.4px;top:234.45px;width:0;height:0;border-left:5px solid transparent;border-top:5px solid #f01010"></div><div class="cell" style="left:479.4px;top:234.45px;width:21.5px;height:12.830000000000041px;background:#fff;border-right:1px solid #e4e4e4;border-bottom:1px solid #ededed"></div><div class="cell" style="left:500.9px;top:234.45px;width:54.0px;height:12.830000000000041px;background:#fffec6;border-right:1px solid #e4e4e4;border-bottom:1px solid #fffec6"></div><div class="cell" style="left:0;top:247.28000000000003px;width:28.799999999999983px;height:12.829999999999984px;background:linear-gradient(#fcf9ee,#f6f1e0);border-right:1px solid #cdc5a5;border-bottom:1px solid #d6ceb0;text-align:center;font-size:9.2px;font-weight:normal;color:#5a4a40;line-height:13.429999999999984px">19</div><div class="cell" style="left:28.799999999999983px;top:247.28000000000003px;width:336.2px;height:12.829999999999984px;background:#fff;border-right:1px solid #e4e4e4;border-bottom:1px solid #ededed"></div><div class="cell" style="left:365.0px;top:247.28000000000003px;width:28.100000000000023px;height:12.829999999999984px;background:#fff;border-right:1px solid #e4e4e4;border-bottom:1px solid #ededed"></div><div class="cell" style="left:393.1px;top:247.28000000000003px;width:86.29999999999995px;height:12.829999999999984px;background:#fffec6;border-right:1px solid #e4e4e4;border-bottom:1px solid #fffec6"></div><div class="cell" style="left:474.4px;top:247.28000000000003px;width:0;height:0;border-left:5px solid transparent;border-top:5px solid #f01010"></div><div class="cell" style="left:479.4px;top:247.28000000000003px;width:21.5px;height:12.829999999999984px;background:#fff;border-right:1px solid #e4e4e4;border-bottom:1px solid #ededed"></div><div class="cell" style="left:500.9px;top:247.28000000000003px;width:54.0px;height:12.829999999999984px;background:#fffec6;border-right:1px solid #e4e4e4;border-bottom:1px solid #fffec6"></div><div class="cell" style="left:0;top:260.11px;width:28.799999999999983px;height:12.829999999999984px;background:linear-gradient(#fcf9ee,#f6f1e0);border-right:1px solid #cdc5a5;border-bottom:1px solid #d6ceb0;text-align:center;font-size:9.2px;font-weight:normal;color:#5a4a40;line-height:13.429999999999984px">20</div><div class="cell" style="left:28.799999999999983px;top:260.11px;width:336.2px;height:12.829999999999984px;background:#fff;border-right:1px solid #e4e4e4;border-bottom:1px solid #ededed"></div><div class="cell" style="left:365.0px;top:260.11px;width:28.100000000000023px;height:12.829999999999984px;background:#fff;border-right:1px solid #e4e4e4;border-bottom:1px solid #ededed"></div><div class="cell" style="left:393.1px;top:260.11px;width:86.29999999999995px;height:12.829999999999984px;background:#fffec6;border-right:1px solid #e4e4e4;border-bottom:1px solid #fffec6"></div><div class="cell" style="left:474.4px;top:260.11px;width:0;height:0;border-left:5px solid transparent;border-top:5px solid #f01010"></div><div class="cell" style="left:479.4px;top:260.11px;width:21.5px;height:12.829999999999984px;background:#fff;border-right:1px solid #e4e4e4;border-bottom:1px solid #ededed"></div><div class="cell" style="left:500.9px;top:260.11px;width:54.0px;height:12.829999999999984px;background:#fffec6;border-right:1px solid #e4e4e4;border-bottom:1px solid #fffec6"></div><div class="cell" style="left:0;top:272.94px;width:28.799999999999983px;height:12.830000000000041px;background:linear-gradient(#fcf9ee,#f6f1e0);border-right:1px solid #cdc5a5;border-bottom:1px solid #d6ceb0;text-align:center;font-size:9.2px;font-weight:normal;color:#5a4a40;line-height:13.43000000000004px">21</div><div class="cell" style="left:28.799999999999983px;top:272.94px;width:336.2px;height:12.830000000000041px;background:#fff;border-right:1px solid #e4e4e4;border-bottom:1px solid #ededed"></div><div class="cell" style="left:365.0px;top:272.94px;width:28.100000000000023px;height:12.830000000000041px;background:#fff;border-right:1px solid #e4e4e4;border-bottom:1px solid #ededed"></div><div class="cell" style="left:393.1px;top:272.94px;width:86.29999999999995px;height:12.830000000000041px;background:#fffec6;border-right:1px solid #e4e4e4;border-bottom:1px solid #fffec6"></div><div class="cell" style="left:474.4px;top:272.94px;width:0;height:0;border-left:5px solid transparent;border-top:5px solid #f01010"></div><div class="cell" style="left:479.4px;top:272.94px;width:21.5px;height:12.830000000000041px;background:#fff;border-right:1px solid #e4e4e4;border-bottom:1px solid #ededed"></div><div class="cell" style="left:500.9px;top:272.94px;width:54.0px;height:12.830000000000041px;background:#fffec6;border-right:1px solid #e4e4e4;border-bottom:1px solid #fffec6"></div><div class="cell" style="left:0;top:285.77000000000004px;width:28.799999999999983px;height:12.829999999999984px;background:linear-gradient(#fcf9ee,#f6f1e0);border-right:1px solid #cdc5a5;border-bottom:1px solid #d6ceb0;text-align:center;font-size:9.2px;font-weight:normal;color:#5a4a40;line-height:13.429999999999984px">22</div><div class="cell" style="left:28.799999999999983px;top:285.77000000000004px;width:336.2px;height:12.829999999999984px;background:#fff;border-right:1px solid #e4e4e4;border-bottom:1px solid #ededed"></div><div class="cell" style="left:365.0px;top:285.77000000000004px;width:28.100000000000023px;height:12.829999999999984px;background:#fff;border-right:1px solid #e4e4e4;border-bottom:1px solid #ededed"></div><div class="cell" style="left:393.1px;top:285.77000000000004px;width:86.29999999999995px;height:12.829999999999984px;background:#fffec6;border-right:1px solid #e4e4e4;border-bottom:1px solid #fffec6"></div><div class="cell" style="left:474.4px;top:285.77000000000004px;width:0;height:0;border-left:5px solid transparent;border-top:5px solid #f01010"></div><div class="cell" style="left:479.4px;top:285.77000000000004px;width:21.5px;height:12.829999999999984px;background:#fff;border-right:1px solid #e4e4e4;border-bottom:1px solid #ededed"></div><div class="cell" style="left:500.9px;top:285.77000000000004px;width:54.0px;height:12.829999999999984px;background:#fffec6;border-right:1px solid #e4e4e4;border-bottom:1px solid #fffec6"></div><div class="cell" style="left:0;top:298.6px;width:28.799999999999983px;height:12.829999999999984px;background:linear-gradient(#fcf9ee,#f6f1e0);border-right:1px solid #cdc5a5;border-bottom:1px solid #d6ceb0;text-align:center;font-size:9.2px;font-weight:normal;color:#5a4a40;line-height:13.429999999999984px">23</div><div class="cell" style="left:28.799999999999983px;top:298.6px;width:336.2px;height:12.829999999999984px;background:#fff;border-right:1px solid #e4e4e4;border-bottom:1px solid #ededed"></div><div class="cell" style="left:365.0px;top:298.6px;width:28.100000000000023px;height:12.829999999999984px;background:#fff;border-right:1px solid #e4e4e4;border-bottom:1px solid #ededed"></div><div class="cell" style="left:393.1px;top:298.6px;width:86.29999999999995px;height:12.829999999999984px;background:#fffec6;border-right:1px solid #e4e4e4;border-bottom:1px solid #fffec6"></div><div class="cell" style="left:474.4px;top:298.6px;width:0;height:0;border-left:5px solid transparent;border-top:5px solid #f01010"></div><div class="cell" style="left:479.4px;top:298.6px;width:21.5px;height:12.829999999999984px;background:#fff;border-right:1px solid #e4e4e4;border-bottom:1px solid #ededed"></div><div class="cell" style="left:500.9px;top:298.6px;width:54.0px;height:12.829999999999984px;background:#fffec6;border-right:1px solid #e4e4e4;border-bottom:1px solid #fffec6"></div><div class="cell" style="left:0;top:311.43px;width:28.799999999999983px;height:12.829999999999984px;background:linear-gradient(#fcf9ee,#f6f1e0);border-right:1px solid #cdc5a5;border-bottom:1px solid #d6ceb0;text-align:center;font-size:9.2px;font-weight:normal;color:#5a4a40;line-height:13.429999999999984px">24</div><div class="cell" style="left:28.799999999999983px;top:311.43px;width:336.2px;height:12.829999999999984px;background:#fff;border-right:1px solid #e4e4e4;border-bottom:1px solid #ededed"></div><div class="cell" style="left:365.0px;top:311.43px;width:28.100000000000023px;height:12.829999999999984px;background:#fff;border-right:1px solid #e4e4e4;border-bottom:1px solid #ededed"></div><div class="cell" style="left:393.1px;top:311.43px;width:86.29999999999995px;height:12.829999999999984px;background:#fffec6;border-right:1px solid #e4e4e4;border-bottom:1px solid #fffec6"></div><div class="cell" style="left:474.4px;top:311.43px;width:0;height:0;border-left:5px solid transparent;border-top:5px solid #f01010"></div><div class="cell" style="left:479.4px;top:311.43px;width:21.5px;height:12.829999999999984px;background:#fff;border-right:1px solid #e4e4e4;border-bottom:1px solid #ededed"></div><div class="cell" style="left:500.9px;top:311.43px;width:54.0px;height:12.829999999999984px;background:#fffec6;border-right:1px solid #e4e4e4;border-bottom:1px solid #fffec6"></div><div class="cell" style="left:0;top:324.26px;width:28.799999999999983px;height:12.829999999999984px;background:linear-gradient(#fcf9ee,#f6f1e0);border-right:1px solid #cdc5a5;border-bottom:1px solid #d6ceb0;text-align:center;font-size:9.2px;font-weight:normal;color:#5a4a40;line-height:13.429999999999984px">25</div><div class="cell" style="left:28.799999999999983px;top:324.26px;width:336.2px;height:12.829999999999984px;background:#fff;border-right:1px solid #e4e4e4;border-bottom:1px solid #ededed"></div><div class="cell" style="left:365.0px;top:324.26px;width:28.100000000000023px;height:12.829999999999984px;background:#fff;border-right:1px solid #e4e4e4;border-bottom:1px solid #ededed"></div><div class="cell" style="left:393.1px;top:324.26px;width:86.29999999999995px;height:12.829999999999984px;background:#c5dec3;border-right:1px solid #e4e4e4;border-bottom:1px solid #c5dec3"></div><div class="cell" style="left:474.4px;top:324.26px;width:0;height:0;border-left:5px solid transparent;border-top:5px solid #f01010"></div><div class="cell" style="left:479.4px;top:324.26px;width:21.5px;height:12.829999999999984px;background:#fff;border-right:1px solid #e4e4e4;border-bottom:1px solid #ededed"></div><div class="cell" style="left:500.9px;top:324.26px;width:54.0px;height:12.829999999999984px;background:#c5dec3;border-right:1px solid #e4e4e4;border-bottom:1px solid #c5dec3"></div><div class="cell" style="left:0;top:337.09px;width:28.799999999999983px;height:12.830000000000041px;background:linear-gradient(#fcf9ee,#f6f1e0);border-right:1px solid #cdc5a5;border-bottom:1px solid #d6ceb0;text-align:center;font-size:9.2px;font-weight:normal;color:#5a4a40;line-height:13.43000000000004px">26</div><div class="cell" style="left:28.799999999999983px;top:337.09px;width:336.2px;height:12.830000000000041px;background:#fff;border-right:1px solid #e4e4e4;border-bottom:1px solid #ededed"></div><div class="cell" style="left:365.0px;top:337.09px;width:28.100000000000023px;height:12.830000000000041px;background:#fff;border-right:1px solid #e4e4e4;border-bottom:1px solid #ededed"></div><div class="cell" style="left:393.1px;top:337.09px;width:86.29999999999995px;height:12.830000000000041px;background:#fff;border-right:1px solid #e4e4e4;border-bottom:1px solid #ededed"></div><div class="cell" style="left:479.4px;top:337.09px;width:21.5px;height:12.830000000000041px;background:#fff;border-right:1px solid #e4e4e4;border-bottom:1px solid #ededed"></div><div class="cell" style="left:500.9px;top:337.09px;width:54.0px;height:12.830000000000041px;background:#fff;border-right:1px solid #e4e4e4;border-bottom:1px solid #ededed"></div><div class="cell" style="left:0;top:349.92px;width:28.799999999999983px;height:12.829999999999984px;background:linear-gradient(#fcf9ee,#f6f1e0);border-right:1px solid #cdc5a5;border-bottom:1px solid #d6ceb0;text-align:center;font-size:9.2px;font-weight:normal;color:#5a4a40;line-height:13.429999999999984px">27</div><div class="cell" style="left:28.799999999999983px;top:349.92px;width:336.2px;height:12.829999999999984px;background:#fff;border-right:1px solid #e4e4e4;border-bottom:1px solid #ededed"></div><div class="cell" style="left:365.0px;top:349.92px;width:28.100000000000023px;height:12.829999999999984px;background:#fff;border-right:1px solid #e4e4e4;border-bottom:1px solid #ededed"></div><div class="cell" style="left:393.1px;top:349.92px;width:86.29999999999995px;height:12.829999999999984px;background:#fffec6;border-right:1px solid #e4e4e4;border-bottom:1px solid #fffec6"></div><div class="cell" style="left:474.4px;top:349.92px;width:0;height:0;border-left:5px solid transparent;border-top:5px solid #f01010"></div><div class="cell" style="left:479.4px;top:349.92px;width:21.5px;height:12.829999999999984px;background:#fff;border-right:1px solid #e4e4e4;border-bottom:1px solid #ededed"></div><div class="cell" style="left:500.9px;top:349.92px;width:54.0px;height:12.829999999999984px;background:#fffec6;border-right:1px solid #e4e4e4;border-bottom:1px solid #fffec6"></div><div class="cell" style="left:0;top:362.75px;width:28.799999999999983px;height:12.829999999999984px;background:linear-gradient(#fcf9ee,#f6f1e0);border-right:1px solid #cdc5a5;border-bottom:1px solid #d6ceb0;text-align:center;font-size:9.2px;font-weight:normal;color:#5a4a40;line-height:13.429999999999984px">28</div><div class="cell" style="left:28.799999999999983px;top:362.75px;width:336.2px;height:12.829999999999984px;background:#fff;border-right:1px solid #e4e4e4;border-bottom:1px solid #ededed"></div><div class="cell" style="left:365.0px;top:362.75px;width:28.100000000000023px;height:12.829999999999984px;background:#fff;border-right:1px solid #e4e4e4;border-bottom:1px solid #ededed"></div><div class="cell" style="left:393.1px;top:362.75px;width:86.29999999999995px;height:12.829999999999984px;background:#fffec6;border-right:1px solid #e4e4e4;border-bottom:1px solid #fffec6"></div><div class="cell" style="left:474.4px;top:362.75px;width:0;height:0;border-left:5px solid transparent;border-top:5px solid #f01010"></div><div class="cell" style="left:479.4px;top:362.75px;width:21.5px;height:12.829999999999984px;background:#fff;border-right:1px solid #e4e4e4;border-bottom:1px solid #ededed"></div><div class="cell" style="left:500.9px;top:362.75px;width:54.0px;height:12.829999999999984px;background:#fffec6;border-right:1px solid #e4e4e4;border-bottom:1px solid #fffec6"></div><div class="cell" style="left:0;top:375.58px;width:28.799999999999983px;height:12.830000000000041px;background:linear-gradient(#fcf9ee,#f6f1e0);border-right:1px solid #cdc5a5;border-bottom:1px solid #d6ceb0;text-align:center;font-size:9.2px;font-weight:normal;color:#5a4a40;line-height:13.43000000000004px">29</div><div class="cell" style="left:28.799999999999983px;top:375.58px;width:336.2px;height:12.830000000000041px;background:#fff;border-right:1px solid #e4e4e4;border-bottom:1px solid #ededed"></div><div class="cell" style="left:365.0px;top:375.58px;width:28.100000000000023px;height:12.830000000000041px;background:#fff;border-right:1px solid #e4e4e4;border-bottom:1px solid #ededed"></div><div class="cell" style="left:393.1px;top:375.58px;width:86.29999999999995px;height:12.830000000000041px;background:#fffec6;border-right:1px solid #e4e4e4;border-bottom:1px solid #fffec6"></div><div class="cell" style="left:474.4px;top:375.58px;width:0;height:0;border-left:5px solid transparent;border-top:5px solid #f01010"></div><div class="cell" style="left:479.4px;top:375.58px;width:21.5px;height:12.830000000000041px;background:#fff;border-right:1px solid #e4e4e4;border-bottom:1px solid #ededed"></div><div class="cell" style="left:500.9px;top:375.58px;width:54.0px;height:12.830000000000041px;background:#fffec6;border-right:1px solid #e4e4e4;border-bottom:1px solid #fffec6"></div><div class="cell" style="left:0;top:388.41px;width:28.799999999999983px;height:12.830000000000041px;background:linear-gradient(#fcf9ee,#f6f1e0);border-right:1px solid #cdc5a5;border-bottom:1px solid #d6ceb0;text-align:center;font-size:9.2px;font-weight:normal;color:#5a4a40;line-height:13.43000000000004px">30</div><div class="cell" style="left:28.799999999999983px;top:388.41px;width:336.2px;height:12.830000000000041px;background:#fff;border-right:1px solid #e4e4e4;border-bottom:1px solid #ededed"></div><div class="cell" style="left:365.0px;top:388.41px;width:28.100000000000023px;height:12.830000000000041px;background:#fff;border-right:1px solid #e4e4e4;border-bottom:1px solid #ededed"></div><div class="cell" style="left:393.1px;top:388.41px;width:86.29999999999995px;height:12.830000000000041px;background:#fffec6;border-right:1px solid #e4e4e4;border-bottom:1px solid #fffec6"></div><div class="cell" style="left:474.4px;top:388.41px;width:0;height:0;border-left:5px solid transparent;border-top:5px solid #f01010"></div><div class="cell" style="left:479.4px;top:388.41px;width:21.5px;height:12.830000000000041px;background:#fff;border-right:1px solid #e4e4e4;border-bottom:1px solid #ededed"></div><div class="cell" style="left:500.9px;top:388.41px;width:54.0px;height:12.830000000000041px;background:#fffec6;border-right:1px solid #e4e4e4;border-bottom:1px solid #fffec6"></div><div class="cell" style="left:0;top:401.24000000000007px;width:28.799999999999983px;height:12.829999999999927px;background:linear-gradient(#fcf9ee,#f6f1e0);border-right:1px solid #cdc5a5;border-bottom:1px solid #d6ceb0;text-align:center;font-size:9.2px;font-weight:normal;color:#5a4a40;line-height:13.429999999999927px">31</div><div class="cell" style="left:28.799999999999983px;top:401.24000000000007px;width:336.2px;height:12.829999999999927px;background:#fff;border-right:1px solid #e4e4e4;border-bottom:1px solid #ededed"></div><div class="cell" style="left:365.0px;top:401.24000000000007px;width:28.100000000000023px;height:12.829999999999927px;background:#fff;border-right:1px solid #e4e4e4;border-bottom:1px solid #ededed"></div><div class="cell" style="left:393.1px;top:401.24000000000007px;width:86.29999999999995px;height:12.829999999999927px;background:#fffec6;border-right:1px solid #e4e4e4;border-bottom:1px solid #fffec6"></div><div class="cell" style="left:474.4px;top:401.24000000000007px;width:0;height:0;border-left:5px solid transparent;border-top:5px solid #f01010"></div><div class="cell" style="left:479.4px;top:401.24000000000007px;width:21.5px;height:12.829999999999927px;background:#fff;border-right:1px solid #e4e4e4;border-bottom:1px solid #ededed"></div><div class="cell" style="left:500.9px;top:401.24000000000007px;width:54.0px;height:12.829999999999927px;background:#fffec6;border-right:1px solid #e4e4e4;border-bottom:1px solid #fffec6"></div><div class="cell" style="left:0;top:414.07px;width:28.799999999999983px;height:12.829999999999927px;background:linear-gradient(#fcf9ee,#f6f1e0);border-right:1px solid #cdc5a5;border-bottom:1px solid #d6ceb0;text-align:center;font-size:9.2px;font-weight:normal;color:#5a4a40;line-height:13.429999999999927px">32</div><div class="cell" style="left:28.799999999999983px;top:414.07px;width:336.2px;height:12.829999999999927px;background:#fff;border-right:1px solid #e4e4e4;border-bottom:1px solid #ededed"></div><div class="cell" style="left:365.0px;top:414.07px;width:28.100000000000023px;height:12.829999999999927px;background:#fff;border-right:1px solid #e4e4e4;border-bottom:1px solid #ededed"></div><div class="cell" style="left:393.1px;top:414.07px;width:86.29999999999995px;height:12.829999999999927px;background:#fffec6;border-right:1px solid #e4e4e4;border-bottom:1px solid #fffec6"></div><div class="cell" style="left:474.4px;top:414.07px;width:0;height:0;border-left:5px solid transparent;border-top:5px solid #f01010"></div><div class="cell" style="left:479.4px;top:414.07px;width:21.5px;height:12.829999999999927px;background:#fff;border-right:1px solid #e4e4e4;border-bottom:1px solid #ededed"></div><div class="cell" style="left:500.9px;top:414.07px;width:54.0px;height:12.829999999999927px;background:#fffec6;border-right:1px solid #e4e4e4;border-bottom:1px solid #fffec6"></div><div class="cell" style="left:0;top:426.8999999999999px;width:28.799999999999983px;height:12.830000000000155px;background:linear-gradient(#fcf9ee,#f6f1e0);border-right:1px solid #cdc5a5;border-bottom:1px solid #d6ceb0;text-align:center;font-size:9.2px;font-weight:normal;color:#5a4a40;line-height:13.430000000000154px">33</div><div class="cell" style="left:28.799999999999983px;top:426.8999999999999px;width:336.2px;height:12.830000000000155px;background:#fff;border-right:1px solid #e4e4e4;border-bottom:1px solid #ededed"></div><div class="cell" style="left:365.0px;top:426.8999999999999px;width:28.100000000000023px;height:12.830000000000155px;background:#fff;border-right:1px solid #e4e4e4;border-bottom:1px solid #ededed"></div><div class="cell" style="left:393.1px;top:426.8999999999999px;width:86.29999999999995px;height:12.830000000000155px;background:#fffec6;border-right:1px solid #e4e4e4;border-bottom:1px solid #fffec6"></div><div class="cell" style="left:474.4px;top:426.8999999999999px;width:0;height:0;border-left:5px solid transparent;border-top:5px solid #f01010"></div><div class="cell" style="left:479.4px;top:426.8999999999999px;width:21.5px;height:12.830000000000155px;background:#fff;border-right:1px solid #e4e4e4;border-bottom:1px solid #ededed"></div><div class="cell" style="left:500.9px;top:426.8999999999999px;width:54.0px;height:12.830000000000155px;background:#fffec6;border-right:1px solid #e4e4e4;border-bottom:1px solid #fffec6"></div><div class="cell" style="left:28.799999999999983px;top:40.65px;width:526.0999999999999px;height:1.7px;background:#2a2a2a"></div><div class="cell" style="left:28.799999999999983px;top:66.80999999999999px;width:336.2px;height:1.9px;background:#7a7a7a"></div><div class="cell" style="left:393.1px;top:66.80999999999999px;width:86.29999999999995px;height:1.9px;background:#7a7a7a"></div><div class="cell" style="left:500.9px;top:66.80999999999999px;width:54.0px;height:1.9px;background:#7a7a7a"></div><div class="cell" style="left:28.799999999999983px;top:79.64px;width:526.0999999999999px;height:1.3px;background:#555560"></div><div class="cell" style="left:28.799999999999983px;top:92.29499999999999px;width:526.0999999999999px;height:1.05px;background:#44444c"></div><div class="cell" style="left:28.799999999999983px;top:220.57px;width:526.0999999999999px;height:1.1px;background:#404048"></div><div class="cell" style="left:28.799999999999983px;top:336.03999999999996px;width:526.0999999999999px;height:1.1px;background:#404048"></div><div class="cell" style="left:363.5px;top:80.49000000000001px;width:1.5px;height:12.829999999999984px;background:#c6cce8"></div><div class="cell ts" style="left:31.399999999999984px;top:27.200000000000017px;font:bold 12.3px 'Liberation Serif';color:#101020">[КонсолидированныйОтчет][ОТЧЕТОДВИЖЕНИИДЕНЕЖНЫХСРЕДСТВЗА][ОписаниеПериода]</div><div class="cell ts" style="left:30.299999999999983px;top:53.930000000000014px;font:bold italic 11.8px 'Liberation Serif';color:#101020;transform:scaleX(0.925);transform-origin:0 0">RUR'000</div><div class="cell ts" style="left:30.599999999999984px;top:80.99000000000001px;font:bold 10.3px 'Liberation Serif';color:#0c0c18;transform:scaleX(0.945);transform-origin:0 0">[ОстатокДенежныхСредствНаНачалоОтчетногоПериода]</div><div class="cell ts" style="left:30.599999999999984px;top:93.82px;font:bold 10.3px 'Liberation Serif';color:#0c0c18;transform:scaleX(0.945);transform-origin:0 0">[ОперационнаяДеятельность]</div><div class="cell ts" style="left:30.599999999999984px;top:108.15px;font:9.5px 'Liberation Serif';color:#10102a;-webkit-text-stroke:0.12px #10102a">[ВыручкаОтПокупателейЗаказчиков]</div><div class="cell ts" style="left:30.599999999999984px;top:120.98000000000002px;font:9.5px 'Liberation Serif';color:#10102a;-webkit-text-stroke:0.12px #10102a">[ПрочиеДоходы]</div><div class="cell ts" style="left:30.599999999999984px;top:133.81px;font:9.5px 'Liberation Serif';color:#10102a;-webkit-text-stroke:0.12px #10102a">[ПриобретениеТоваровРаботИУслуг]</div><div class="cell ts" style="left:30.599999999999984px;top:146.64px;font:9.5px 'Liberation Serif';color:#10102a;-webkit-text-stroke:0.12px #10102a">[ОплатаТруда]</div><div class="cell ts" style="left:30.599999999999984px;top:159.46999999999997px;font:9.5px 'Liberation Serif';color:#10102a;-webkit-text-stroke:0.12px #10102a">[ВыплатаПроцентовПоЗаймамИКредитам]</div><div class="cell ts" style="left:30.599999999999984px;top:172.3px;font:9.5px 'Liberation Serif';color:#10102a;-webkit-text-stroke:0.12px #10102a">[РасчетыПоНалогамИСборам]</div><div class="cell ts" style="left:30.599999999999984px;top:185.13px;font:9.5px 'Liberation Serif';color:#10102a;-webkit-text-stroke:0.12px #10102a">[ПлатежиПоНалогуНаПрибыль]</div><div class="cell ts" style="left:30.599999999999984px;top:197.95999999999998px;font:9.5px 'Liberation Serif';color:#10102a;-webkit-text-stroke:0.12px #10102a">[ПрочиеРасходы]</div><div class="cell ts" style="left:30.599999999999984px;top:209.29000000000002px;font:bold 10.3px 'Liberation Serif';color:#0c0c18;transform:scaleX(0.945);transform-origin:0 0">[ЧистоеИзменениеДенежныхСредствПоОперационнойДеятельности]</div><div class="cell ts" style="left:30.599999999999984px;top:222.12px;font:bold 10.3px 'Liberation Serif';color:#0c0c18;transform:scaleX(0.945);transform-origin:0 0">[ИнвестиционнаяДеятельность]</div><div class="cell ts" style="left:30.599999999999984px;top:236.45px;font:9.5px 'Liberation Serif';color:#10102a;-webkit-text-stroke:0.12px #10102a">[ВыручкаОтПродажиОсновныхСредствИИныхВнеоборотныхАктивов]</div><div class="cell ts" style="left:30.599999999999984px;top:249.28000000000003px;font:9.5px 'Liberation Serif';color:#10102a;-webkit-text-stroke:0.12px #10102a">[ПолученныеПроценты]</div><div class="cell ts" style="left:30.599999999999984px;top:262.11px;font:9.5px 'Liberation Serif';color:#10102a;-webkit-text-stroke:0.12px #10102a">[ПоступленияОтПогашенияЗаймов]</div><div class="cell ts" style="left:30.599999999999984px;top:274.94px;font:9.5px 'Liberation Serif';color:#10102a;-webkit-text-stroke:0.12px #10102a">[ПрочиеПоступленияОтИнвестиционнойДеятельности]</div><div class="cell ts" style="left:30.599999999999984px;top:287.77000000000004px;font:9.5px 'Liberation Serif';color:#10102a;-webkit-text-stroke:0.12px #10102a">[ПриобретениеОсновныхСредствНематериальныхАктивов]</div><div class="cell ts" style="left:30.599999999999984px;top:300.6px;font:9.5px 'Liberation Serif';color:#10102a;-webkit-text-stroke:0.12px #10102a">[ЗаймыДругимОрганизациям]</div><div class="cell ts" style="left:30.599999999999984px;top:313.43px;font:9.5px 'Liberation Serif';color:#10102a;-webkit-text-stroke:0.12px #10102a">[ПрочиеОттокиДенежныхСредствПоИнвестиционнойДеятельности]</div><div class="cell ts" style="left:30.599999999999984px;top:324.76px;font:bold 10.3px 'Liberation Serif';color:#0c0c18;transform:scaleX(0.945);transform-origin:0 0">[ЧистоеИзменениеДенежныхСредствПоИнвестиционнойДеятельности]</div><div class="cell ts" style="left:30.599999999999984px;top:337.59px;font:bold 10.3px 'Liberation Serif';color:#0c0c18;transform:scaleX(0.945);transform-origin:0 0">[ФинансоваяДеятельность]</div><div class="cell ts" style="left:30.599999999999984px;top:351.92px;font:9.5px 'Liberation Serif';color:#10102a;-webkit-text-stroke:0.12px #10102a">[ПолученныеЗаймыИКредиты]</div><div class="cell ts" style="left:30.599999999999984px;top:364.75px;font:9.5px 'Liberation Serif';color:#10102a;-webkit-text-stroke:0.12px #10102a">[ПрочиеПритокиДенежныхСредствПоФинансовойДеятельности]</div><div class="cell ts" style="left:30.599999999999984px;top:377.58px;font:9.5px 'Liberation Serif';color:#10102a;-webkit-text-stroke:0.12px #10102a">[ВыплатаДивидендов]</div><div class="cell ts" style="left:30.599999999999984px;top:390.41px;font:9.5px 'Liberation Serif';color:#10102a;-webkit-text-stroke:0.12px #10102a">[ДивидендыПолучены]</div><div class="cell ts" style="left:30.599999999999984px;top:403.24000000000007px;font:9.5px 'Liberation Serif';color:#10102a;-webkit-text-stroke:0.12px #10102a">[ПогашениеЗаймовИКредитов]</div><div class="cell ts" style="left:30.599999999999984px;top:416.07px;font:9.5px 'Liberation Serif';color:#10102a;-webkit-text-stroke:0.12px #10102a">[ПогашениеОбязательствПоФинансовойАренде]</div><div class="cell ts" style="left:30.599999999999984px;top:428.8999999999999px;font:9.5px 'Liberation Serif';color:#10102a;-webkit-text-stroke:0.12px #10102a">[ПрочиеВыплатыПоФинансовойДеятельности]</div><div class="cell ts" style="left:416.30000000000007px;top:55.63000000000001px;font:bold 9.9px 'Liberation Serif';color:#101020">[ГодКон]</div><div class="cell ts" style="left:527.1px;top:55.63000000000001px;font:bold 9.9px 'Liberation Serif';color:#101020">[ГодНач]</div></div>
<div class="a" style="left:709.8px;top:135.9px;width:12.3px;height:435.6px;background:#fbf8ee;border-left:1px solid #e6e0ca"></div>
<div class="a" style="left:710px;top:136px;width:12px;height:16.2px;background:linear-gradient(90deg,#faf6e8,#f0ead4);border-bottom:1px solid #ddd6be"></div>
<div class="a" style="left:713px;top:141px;width:0;height:0;border-left:3px solid transparent;border-right:3px solid transparent;border-bottom:4px solid #cfcab8"></div>
<div class="a" style="left:710px;top:152.3px;width:12px;height:348px;background:linear-gradient(90deg,#f6f0da,#ebe3c6);border-bottom:1px solid #d6ceb0"></div>
<div class="a" style="left:710px;top:555px;width:12px;height:16px;background:#f7f3e4"></div>
<div class="a" style="left:713px;top:561px;width:0;height:0;border-left:3px solid transparent;border-right:3px solid transparent;border-top:4px solid #76767a"></div>
<div class="a" style="left:156px;top:571.5px;width:566px;height:12.4px;background:#fbf8ee;border-top:1px solid #e6e0ca"></div>
<div class="a" style="left:156px;top:572px;width:16.2px;height:12px;background:linear-gradient(#faf6e8,#f0ead4);border-right:1px solid #ddd6be"></div>
<div class="a" style="left:161px;top:575px;width:0;height:0;border-top:3px solid transparent;border-bottom:3px solid transparent;border-right:4px solid #cfcab8"></div>
<div class="a" style="left:172.2px;top:572px;width:432px;height:12px;background:linear-gradient(#f6f0da,#ebe3c6);border-right:1px solid #d6ceb0"></div>
<div class="a" style="left:694px;top:572px;width:16px;height:12px;background:#f7f3e4"></div>
<div class="a" style="left:700px;top:575px;width:0;height:0;border-top:3px solid transparent;border-bottom:3px solid transparent;border-left:4px solid #76767a"></div>
<div class="a" style="left:709.8px;top:571.5px;width:12.8px;height:12.9px;background:#f8f5ea;border-left:1px solid #e6e0ca;border-top:1px solid #e6e0ca"></div>
<div class="a" style="left:154.9px;top:135.2px;width:568.0px;height:449.40000000000003px;border:1.4px solid #c4bc98"></div>
<div class="a" style="left:729.9px;top:135.8px;width:11.2px;height:11.2px;border-radius:50%;background:radial-gradient(circle at 50% 30%,#fffdf6,#ece6d0 80%);border:0.8px solid #bdb69a"></div>
<div class="a" style="left:732.7px;top:140.20000000000002px;width:0;height:0;border-left:2.8px solid transparent;border-right:2.8px solid transparent;border-top:3px solid #6a5a30"></div>
<div class="a" style="left:741.6px;top:138.2px;font-size:8.8px;color:#b8801e">Структура</div>
<div class="a" style="left:786px;top:144px;width:212.7px;height:1px;background:#cbc4a4"></div>
<div class="a" style="left:736.2px;top:153.3px;width:262.5px;height:215.6px;border:1px solid #cbc4a4;background:#fff"></div>
<div class="a" style="left:737.2px;top:154.3px;width:260.5px;height:16px;background:linear-gradient(#fdfaf0,#f1ebd6);border-bottom:1px solid #e4dec8"></div>
<div class="a" style="left:739.7px;top:157px;font-size:8.8px;color:#404040">Элемент структуры</div>
<svg class="a" style="left:897px;top:287.5px" width="7" height="12" viewBox="0 0 7 12"><path d="M1 0.6 H6 M3.5 0.6 V11.4 M1 11.4 H6" stroke="#404040" stroke-width="1" fill="none"/></svg>
<div class="a" style="left:729.8px;top:375.2px;width:11.2px;height:11.2px;border-radius:50%;background:radial-gradient(circle at 50% 30%,#fffdf6,#ece6d0 80%);border:0.8px solid #bdb69a"></div>
<div class="a" style="left:732.6px;top:379.6px;width:0;height:0;border-left:2.8px solid transparent;border-right:2.8px solid transparent;border-top:3px solid #6a5a30"></div>
<div class="a" style="left:742.5px;top:377px;font-size:8.8px;color:#b8801e">Правила заполнения (показатели отчета)</div>
<div class="a" style="left:914px;top:383px;width:84.7px;height:1px;background:#cbc4a4"></div>
<div class="a" style="left:738.6px;top:394.9px;width:12.6px;height:12.6px;border-radius:50%;background:radial-gradient(circle at 45% 35%,#d8eccc,#8cc078 60%,#5a9a50);border:0.8px solid #8a9a88"></div>
<div class="a" style="left:741.6px;top:400.3px;width:6.6px;height:1.9px;background:#fff"></div>
<div class="a" style="left:744px;top:397.9px;width:1.9px;height:6.6px;background:#fff"></div>
<div class="lbl" style="left:753px;top:396.4px">Добавить</div>
<div class="vsep" style="left:798.5px;top:395px;height:13px;background:#dcd6c0"></div>
<svg class="a" style="left:803.5px;top:395px" width="14" height="13" viewBox="0 0 14 13"><path d="M0.5 0.5 H6.5 L9 3 V11 H0.5 Z" fill="#f0f4fa" stroke="#8aa0b8" stroke-width="0.7"/><path d="M2 4 H7 M2 6 H7 M2 8 H5" stroke="#9ab" stroke-width="0.6"/><circle cx="9.6" cy="9" r="3.3" fill="#8cc078" stroke="#6a9a60" stroke-width="0.6"/><path d="M7.8 9 H11.4 M9.6 7.2 V10.8" stroke="#fff" stroke-width="1.1"/></svg>
<svg class="a" style="left:824px;top:396px" width="12" height="11" viewBox="0 0 12 11"><path d="M1 10.3 L1.6 7.6 L8.4 0.8 L10.9 3.3 L4.1 10.1 Z" fill="#4aa838" stroke="#2a6a20" stroke-width="0.6"/><path d="M2.2 8 L8.8 1.4" stroke="#a0e080" stroke-width="0.7"/></svg>
<svg class="a" style="left:844.3px;top:396.3px" width="10" height="10" viewBox="0 0 10 10"><path d="M1.3 1.3 L8.7 8.7 M8.7 1.3 L1.3 8.7" stroke="#ec4a3c" stroke-width="2.4"/></svg>
<div class="vsep" style="left:860.4px;top:395px;height:13px;background:#dcd6c0"></div>
<svg class="a" style="left:866.5px;top:396.5px" width="11" height="10" viewBox="0 0 11 10"><path d="M5.5 0.5 L10.5 5.5 H7.6 V9.5 H3.4 V5.5 H0.5 Z" fill="#6aa8e0" stroke="#3a78b8" stroke-width="0.6"/></svg>
<svg class="a" style="left:886.2px;top:396.5px" width="11" height="10" viewBox="0 0 11 10"><path d="M5.5 9.5 L10.5 4.5 H7.6 V0.5 H3.4 V4.5 H0.5 Z" fill="#6aa8e0" stroke="#3a78b8" stroke-width="0.6"/></svg>
<div class="lbl" style="left:934.4px;top:396.4px">Все действия</div>
<div class="a" style="left:992px;top:401px;width:0;height:0;border-left:2.5px solid transparent;border-right:2.5px solid transparent;border-top:2.8px solid #505050"></div>
<div class="a" style="left:736.3px;top:415.8px;width:262.80000000000007px;height:168.99999999999994px;border:1px solid #cbc4a4;background:#fff"></div>
<div class="a" style="left:737.3px;top:416.8px;width:76.60000000000002px;height:15.899999999999977px;background:linear-gradient(#fdfaf0,#efe8d2);border-right:1px solid #e0d9c0;border-bottom:1px solid #ddd6bc;overflow:hidden"></div>
<div class="lbl" style="left:739.8px;top:420.0px;color:#404040">Имя области</div>
<div class="a" style="left:813.9px;top:416.8px;width:52.39999999999998px;height:15.899999999999977px;background:linear-gradient(#fdfaf0,#efe8d2);border-right:1px solid #e0d9c0;border-bottom:1px solid #ddd6bc;overflow:hidden"></div>
<div class="lbl" style="left:817.4px;top:420.0px;color:#404040">Вид ячейки</div>
<div class="a" style="left:866.3px;top:416.8px;width:63.30000000000007px;height:15.899999999999977px;background:linear-gradient(#fdfaf0,#efe8d2);border-right:1px solid #e0d9c0;border-bottom:1px solid #ddd6bc;overflow:hidden"></div>
<div class="lbl" style="left:869.8px;top:420.0px;color:#404040">Элемент да...</div>
<div class="a" style="left:929.6px;top:416.8px;width:52.299999999999955px;height:15.899999999999977px;background:linear-gradient(#fdfaf0,#efe8d2);border-right:1px solid #e0d9c0;border-bottom:1px solid #ddd6bc;overflow:hidden"></div>
<div class="lbl" style="left:933.1px;top:420.0px;color:#404040">Имя ресу...</div>
<div class="a" style="left:981.9px;top:416.8px;width:3.800000000000068px;height:15.899999999999977px;background:linear-gradient(#fdfaf0,#efe8d2);border-right:1px solid #e0d9c0;border-bottom:1px solid #ddd6bc;overflow:hidden"></div>
<div class="a" style="left:737.3px;top:432.7px;width:248.4000000000001px;height:17.3px;background:linear-gradient(#fdfaf0,#efe8d2);border-bottom:1px solid #ddd6bc"></div>
<div class="lbl" style="left:739.8px;top:436.3px;color:#404040">Формула</div>
<div class="a" style="left:737.3px;top:450.0px;width:248.4000000000001px;height:30.5px;background:#cde0f9;border-bottom:1px solid #dde2e8"></div>
<div class="a" style="left:813.9px;top:450.0px;width:1px;height:15.25px;background:#e6eaee"></div>
<div class="a" style="left:866.3px;top:450.0px;width:1px;height:15.25px;background:#e6eaee"></div>
<div class="a" style="left:929.6px;top:450.0px;width:1px;height:15.25px;background:#e6eaee"></div>
<div class="a" style="left:981.9px;top:450.0px;width:1px;height:15.25px;background:#e6eaee"></div>
<div class="a" style="left:737.3px;top:465.25px;width:248.4000000000001px;height:1px;background:#d6e4f6"></div>
<div class="a" style="left:737.3px;top:450.6px;width:76.60000000000002px;height:14.65px;background:#6a9ad6"></div>
<div class="lbl" style="left:740.3px;top:453.4px;color:#fff;font-size:8.5px">П0001</div>
<div class="lbl" style="left:817.1px;top:453.4px;color:#202020;font-size:8.3px;-webkit-text-stroke:0.15px #202020">Шаблон</div>
<div class="a" style="left:737.3px;top:480.5px;width:248.4000000000001px;height:30.5px;background:#ffffff;border-bottom:1px solid #dde2e8"></div>
<div class="a" style="left:813.9px;top:480.5px;width:1px;height:15.25px;background:#e6eaee"></div>
<div class="a" style="left:866.3px;top:480.5px;width:1px;height:15.25px;background:#e6eaee"></div>
<div class="a" style="left:929.6px;top:480.5px;width:1px;height:15.25px;background:#e6eaee"></div>
<div class="a" style="left:981.9px;top:480.5px;width:1px;height:15.25px;background:#e6eaee"></div>
<div class="a" style="left:737.3px;top:495.75px;width:248.4000000000001px;height:1px;background:#eef0f0"></div>
<div class="lbl" style="left:740.3px;top:483.9px;color:#202020;font-size:8.5px">П0002</div>
<div class="lbl" style="left:817.1px;top:483.9px;color:#202020;font-size:8.3px;-webkit-text-stroke:0.15px #202020">Шаблон</div>
<div class="a" style="left:737.3px;top:511.0px;width:248.4000000000001px;height:30.5px;background:#f1f5ef;border-bottom:1px solid #dde2e8"></div>
<div class="a" style="left:813.9px;top:511.0px;width:1px;height:15.25px;background:#e6eaee"></div>
<div class="a" style="left:866.3px;top:511.0px;width:1px;height:15.25px;background:#e6eaee"></div>
<div class="a" style="left:929.6px;top:511.0px;width:1px;height:15.25px;background:#e6eaee"></div>
<div class="a" style="left:981.9px;top:511.0px;width:1px;height:15.25px;background:#e6eaee"></div>
<div class="a" style="left:737.3px;top:526.25px;width:248.4000000000001px;height:1px;background:#eef0f0"></div>
<div class="lbl" style="left:740.3px;top:514.4px;color:#202020;font-size:8.5px">П0003</div>
<div class="lbl" style="left:817.1px;top:514.4px;color:#202020;font-size:8.3px;-webkit-text-stroke:0.15px #202020">Шаблон</div>
<div class="a" style="left:737.3px;top:541.5px;width:248.4000000000001px;height:30.5px;background:#ffffff;border-bottom:1px solid #dde2e8"></div>
<div class="a" style="left:813.9px;top:541.5px;width:1px;height:15.25px;background:#e6eaee"></div>
<div class="a" style="left:866.3px;top:541.5px;width:1px;height:15.25px;background:#e6eaee"></div>
<div class="a" style="left:929.6px;top:541.5px;width:1px;height:15.25px;background:#e6eaee"></div>
<div class="a" style="left:981.9px;top:541.5px;width:1px;height:15.25px;background:#e6eaee"></div>
<div class="a" style="left:737.3px;top:556.75px;width:248.4000000000001px;height:1px;background:#eef0f0"></div>
<div class="lbl" style="left:740.3px;top:544.9px;color:#202020;font-size:8.5px">П0004</div>
<div class="lbl" style="left:817.1px;top:544.9px;color:#202020;font-size:8.3px;-webkit-text-stroke:0.15px #202020">Шаблон</div>
<div class="a" style="left:985.7px;top:416.8px;width:12px;height:153.8px;background:#fbf8ee;border-left:1px solid #e6e0ca"></div>
<div class="a" style="left:986px;top:416.8px;width:12px;height:16px;background:linear-gradient(90deg,#faf6e8,#f0ead4)"></div>
<div class="a" style="left:989px;top:421.8px;width:0;height:0;border-left:3px solid transparent;border-right:3px solid transparent;border-bottom:4px solid #cfcab8"></div>
<div class="a" style="left:986px;top:432.8px;width:12px;height:15px;background:linear-gradient(90deg,#f6f0da,#ebe3c6)"></div>
<div class="a" style="left:986px;top:554px;width:12px;height:16px;background:#f4efe0"></div>
<div class="a" style="left:989px;top:560px;width:0;height:0;border-left:3px solid transparent;border-right:3px solid transparent;border-top:4px solid #76767a"></div>
<div class="a" style="left:737.3px;top:570.6px;width:260.80000000000007px;height:13px;background:#fbf8ee;border-top:1px solid #e6e0ca"></div>
<div class="a" style="left:737.3px;top:571px;width:16px;height:12.4px;background:linear-gradient(#faf6e8,#f0ead4)"></div>
<div class="a" style="left:742.3px;top:574px;width:0;height:0;border-top:3px solid transparent;border-bottom:3px solid transparent;border-right:4px solid #cfcab8"></div>
<div class="a" style="left:753px;top:571px;width:66.5px;height:12.4px;background:linear-gradient(#f6f0da,#ebe3c6);border-right:1px solid #d6ceb0"></div>
<div class="a" style="left:969.4px;top:571px;width:16.3px;height:12.4px;background:#f4efe0"></div>
<div class="a" style="left:975px;top:574px;width:0;height:0;border-top:3px solid transparent;border-bottom:3px solid transparent;border-left:4px solid #76767a"></div>
<div class="a" style="left:736.3px;top:415.8px;width:262.80000000000007px;height:168.99999999999994px;border:1px solid #c4bc98"></div>
<div class="a" style="left:714.1999999999999px;top:324.4px;width:3.2px;height:3.2px;border-radius:50%;background:#c6c2b4"></div>
<div class="a" style="left:385.4px;top:576.4px;width:3.2px;height:3.2px;border-radius:50%;background:#c6c2b4"></div>
<div class="a" style="left:784.4px;top:575.9px;width:3.2px;height:3.2px;border-radius:50%;background:#c6c2b4"></div>
<div class="a" style="left:990.4px;top:439.4px;width:3.2px;height:3.2px;border-radius:50%;background:#c6c2b4"></div>
</body></html>
